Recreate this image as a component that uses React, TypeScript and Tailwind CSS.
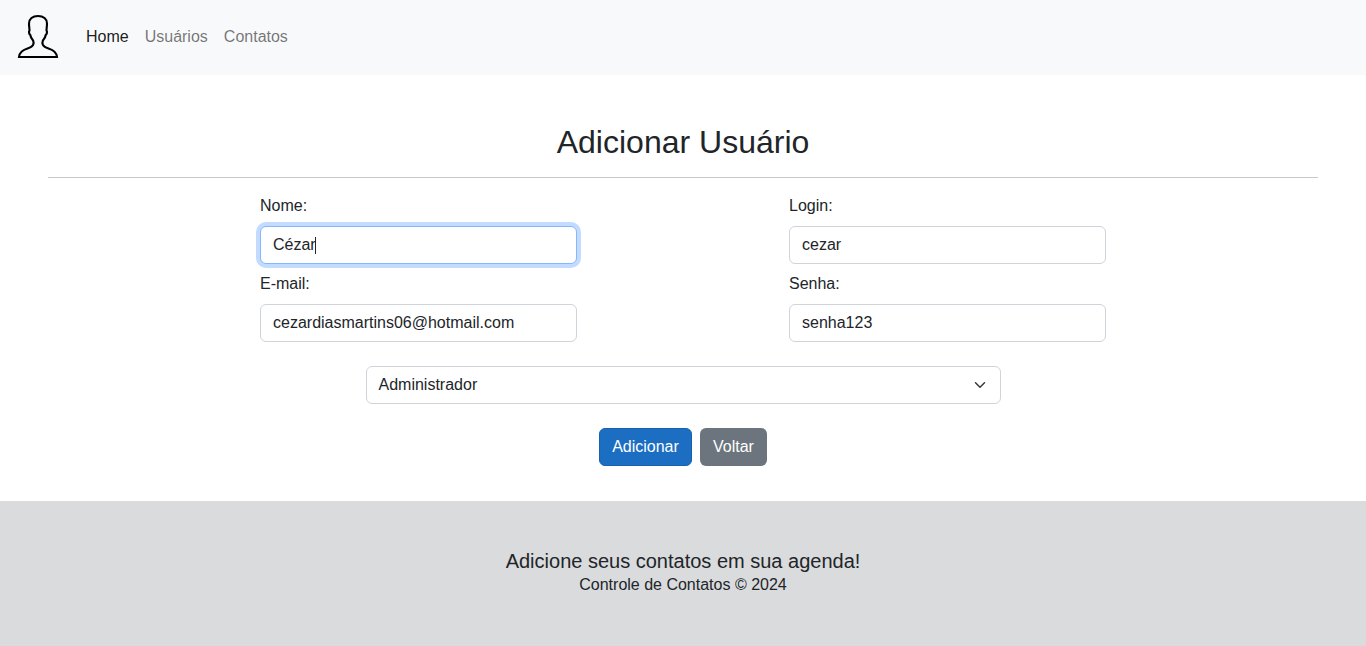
import React from "react";

const field =
  "h-[38px] w-full rounded-md border border-[#ced4da] bg-white px-3 text-base text-[#212529] outline-none";

function Field({ label, value, focused }: { label: string; value: string; focused?: boolean }) {
  return (
    <div className="flex flex-col">
      <label className="mb-2 leading-6">{label}</label>
      {focused ? (
        <div className="flex h-[38px] w-full items-center rounded-md border border-[#86b7fe] bg-white px-3 ring-4 ring-[#0d6efd]/25">
          <span>{value}</span>
          <span className="-ml-px h-[17px] w-px bg-[#212529]" />
        </div>
      ) : (
        <input className={field} defaultValue={value} />
      )}
    </div>
  );
}

export default function App() {
  return (
    <div className="flex min-h-[646px] flex-col bg-white font-['Liberation_Sans',Arial,sans-serif] text-base text-[#212529]">
      <nav className="flex h-[75px] items-center bg-[#f8f9fa] pb-0.5">
        <svg className="ml-[17px] h-[47px] w-[42px]" viewBox="0 0 42 47" fill="none" stroke="#000" strokeWidth="2.1">
          <path d="M21 3C15.500 3 12 6 12 10.500C12 13.500 12.500 15.500 12.500 17.500C11.600 18.500 12 21 13.300 22C13.600 24.500 14.700 26 16.100 27.500C16.700 29 16.700 30.500 16.200 31.700C15.500 33.500 13.500 34.500 10.500 35.400C5.500 37 2.300 39 2 44H40C39.700 39 36.500 37 31.500 35.400C28.500 34.500 26.500 33.500 25.800 31.700C25.300 30.500 25.300 29 25.900 27.500C27.300 26 28.400 24.500 28.700 22C30 21 30.400 18.500 29.500 17.500C29.500 15.500 30 13.500 30 10.500C30 6 26.500 3 21 3Z" />
        </svg>
        <div className="ml-[27px] flex gap-4">
          <a className="text-black/90">Home</a>
          <a className="text-black/55">Usuários</a>
          <a className="text-black/55">Contatos</a>
        </div>
      </nav>
      <main className="flex h-[426px] flex-col px-12 pt-12">
        <h2 className="text-center text-[32px] leading-[38px]">Adicionar Usuário</h2>
        <hr className="my-4 border-t border-[#c7c8c9]" />
        <div className="mx-[212px] grid grid-cols-[317px_317px] justify-between gap-y-2">
          <Field label="Nome:" value="Cézar" focused />
          <Field label="Login:" value="cezar" />
          <Field label="E-mail:" value="cezardiasmartins06@hotmail.com" />
          <Field label="Senha:" value="senha123" />
        </div>
        <div className="mx-auto mt-6 flex h-[38px] w-[635px] shrink-0 items-center justify-between rounded-md border border-[#ced4da] px-3">
          <span>Administrador</span>
          <svg className="h-3 w-4" viewBox="0 0 16 16" fill="none" stroke="#343a40" strokeWidth="2" strokeLinecap="round" strokeLinejoin="round">
            <path d="m2 5 6 6 6-6" />
          </svg>
        </div>
        <div className="mt-6 flex justify-center gap-2">
          <button className="h-[38px] w-[93px] rounded-md border border-[#1861ac] bg-[#1b6ec2] text-white">Adicionar</button>
          <button className="h-[38px] w-[67px] rounded-md bg-[#6c757d] text-white">Voltar</button>
        </div>
      </main>
      <footer className="flex h-[145px] flex-col items-center bg-[#dadbdd] pt-12">
        <p className="text-xl leading-6">Adicione seus contatos em sua agenda!</p>
        <p className="leading-6">Controle de Contatos © 2024</p>
      </footer>
    </div>
  );
}
